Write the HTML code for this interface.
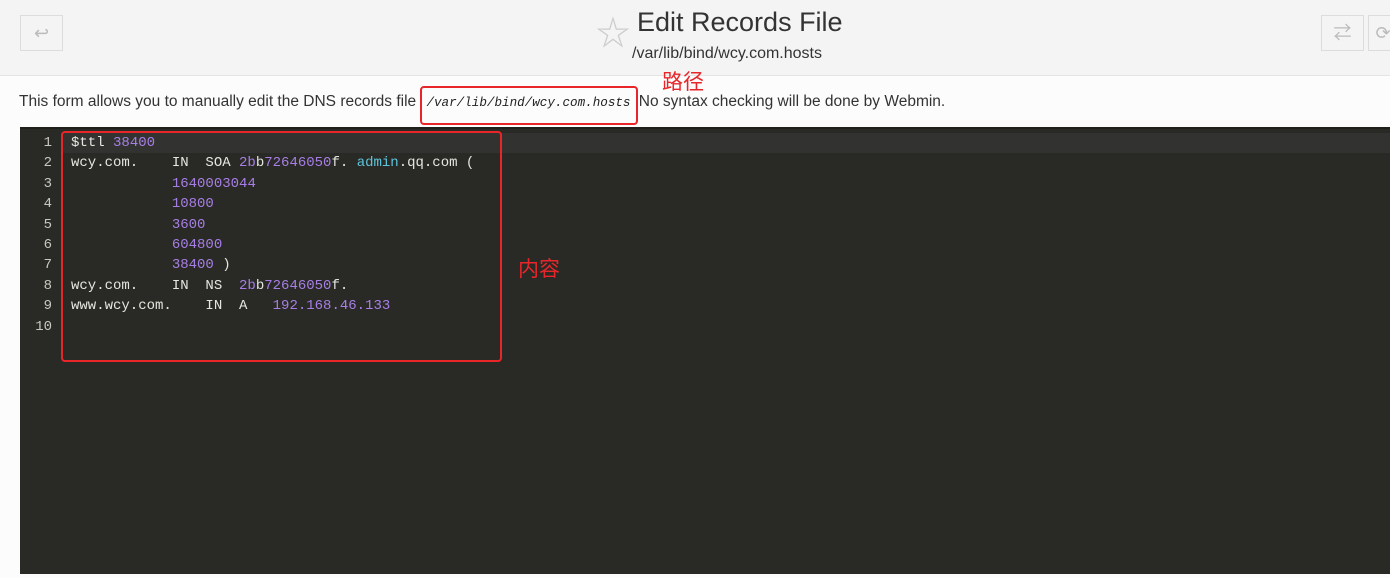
<!DOCTYPE html>
<html><head><meta charset="utf-8"><style>
body{margin:0;width:1390px;height:578px;overflow:hidden;background:#fcfcfc;font-family:"Liberation Sans","Noto Sans CJK SC",sans-serif;position:relative}
.hdr{position:absolute;left:0;top:0;width:1390px;height:75px;background:#f4f4f4;border-bottom:1px solid #e4e4e4}
.btn{position:absolute;top:15px;width:43px;height:36px;border:1px solid #dcdcdc;box-sizing:border-box;color:#bbb;text-align:center;line-height:34px;font-size:18px}
.title{position:absolute;left:637px;top:7px;font-size:27px;color:#333}
.star{position:absolute;left:596px;top:6px;font-size:34px;color:#ccc}
.sub{position:absolute;left:632px;top:45px;font-size:16px;color:#333}
.desc{position:absolute;left:19px;top:93px;font-size:15.5px;color:#333;white-space:nowrap}
.desc i{font-family:"Liberation Mono",monospace;font-size:12.6px;color:#222;margin:0 4px 0 6px}
.ed{position:absolute;left:20px;top:127px;width:1370px;height:445px;background:#292a25;border-top:2px solid #1f1f1c}
.act{position:absolute;left:42px;top:4px;width:1330px;height:20px;background:#323330}
.code{position:absolute;left:0;top:4px;font-family:"Liberation Mono",monospace;font-size:14px;line-height:20.4px;color:#e6e6e0;white-space:pre}
.ln{display:inline-block;width:32px;text-align:right;color:#c8c8c0;margin-right:19px}
.n{color:#a77ee6}.c{color:#5ec4dc}
.red{position:absolute;border:2px solid #e8262a;border-radius:4px}
.rt{position:absolute;color:#e8262a;font-size:21px}
</style></head><body>
<div class="hdr"></div>
<div class="btn" style="left:20px">↩</div>
<div class="btn" style="left:1321px">⇄</div>
<div class="btn" style="left:1368px;width:30px">⟳</div>
<div class="star">☆</div>
<div class="title">Edit Records File</div>
<div class="sub">/var/lib/bind/wcy.com.hosts</div>
<div class="rt" style="left:662px;top:66px">路径</div>
<div class="desc">This form allows you to manually edit the DNS records file <i>/var/lib/bind/wcy.com.hosts</i> No syntax checking will be done by Webmin.</div>
<div class="red" style="left:420px;top:86px;width:214px;height:35px"></div>
<div class="ed">
<div class="act"></div>
<div class="code"><span class="ln">1</span>$ttl <span class="n">38400</span>
<span class="ln">2</span>wcy.com.    IN  SOA <span class="n">2b</span>b<span class="n">72646050</span>f. <span class="c">admin</span>.qq.com (
<span class="ln">3</span>            <span class="n">1640003044</span>
<span class="ln">4</span>            <span class="n">10800</span>
<span class="ln">5</span>            <span class="n">3600</span>
<span class="ln">6</span>            <span class="n">604800</span>
<span class="ln">7</span>            <span class="n">38400</span> )
<span class="ln">8</span>wcy.com.    IN  NS  <span class="n">2b</span>b<span class="n">72646050</span>f.
<span class="ln">9</span>www.wcy.com.    IN  A   <span class="n">192.168.46.133</span>
<span class="ln">10</span></div>
</div>
<div class="red" style="left:61px;top:131px;width:437px;height:227px"></div>
<div class="rt" style="left:518px;top:253px">内容</div>
</body></html>
